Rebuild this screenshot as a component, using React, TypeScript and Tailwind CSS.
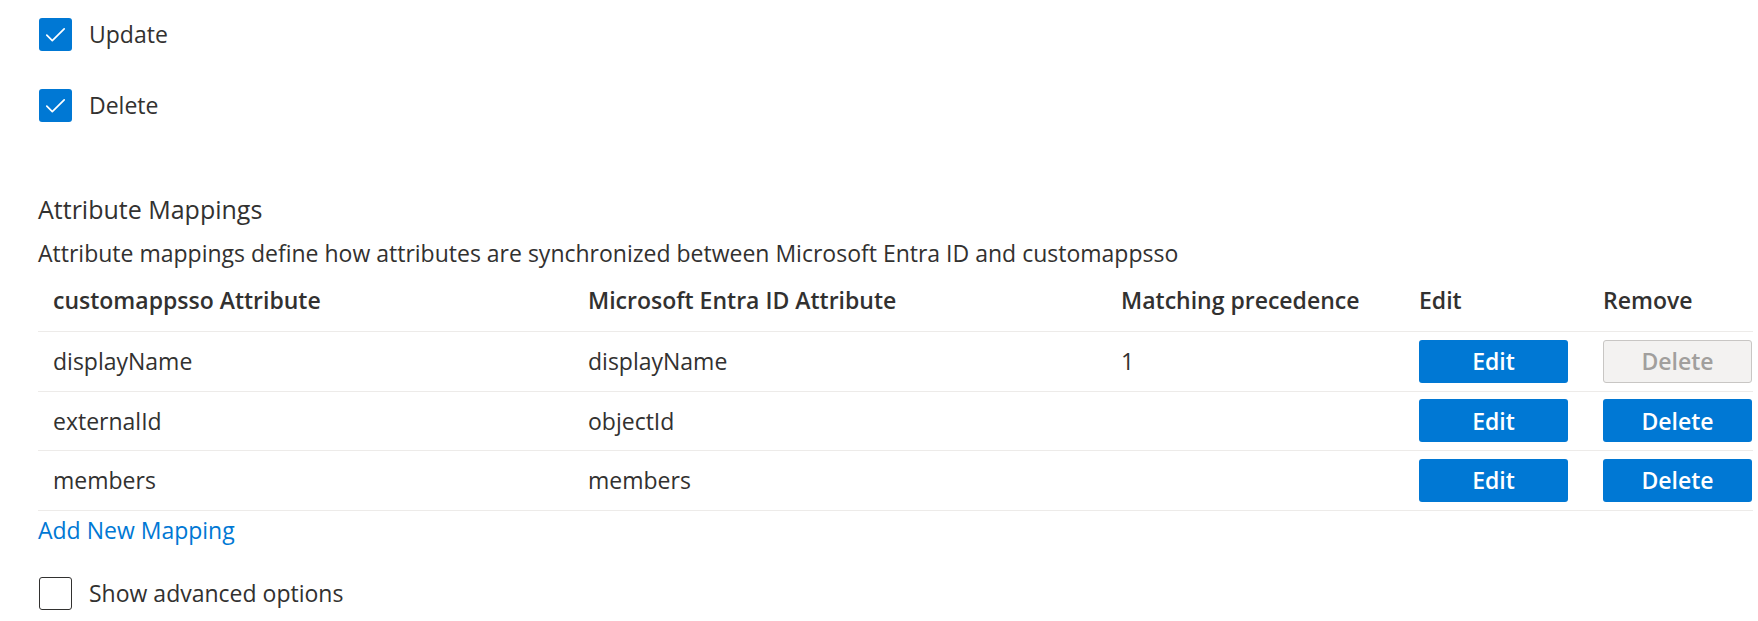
import React from "react";

function Check({ checked }: { checked: boolean }) {
  return checked ? (
    <div className="flex h-[33px] w-[33px] shrink-0 items-center justify-center rounded-[3px] bg-[#0078d4]">
      <svg width="21" height="16" viewBox="0 0 21 16" fill="none">
        <path d="M1.8 8.2 L7.3 13.7 L19.2 1.9" stroke="white" strokeWidth="1.7" strokeLinecap="round" strokeLinejoin="round" />
      </svg>
    </div>
  ) : (
    <div className="h-[33px] w-[33px] shrink-0 rounded-[3px] border-[1.5px] border-[#323130] bg-white" />
  );
}

const rows = [
  { a: "displayName", b: "displayName", c: "1", del: false },
  { a: "externalId", b: "objectId", c: "", del: true },
  { a: "members", b: "members", c: "", del: true },
];

const cols = "grid grid-cols-[535px_533px_298px_184px_165px] items-center";

export default function App() {
  return (
    <div className="min-h-[621px] bg-white pl-[38px] text-[23px] text-[#323130] font-['Open_Sans',sans-serif]">
      <div className="pt-[18px]">
        <div className="flex h-[33px] items-center gap-[17px] pl-[1px]">
          <Check checked />
          <span className="leading-[31px]">Update</span>
        </div>
        <div className="mt-[38px] flex h-[33px] items-center gap-[17px] pl-[1px]">
          <Check checked />
          <span className="leading-[31px]">Delete</span>
        </div>
      </div>
      <div className="mt-[72px] text-[25px] leading-[31px]">Attribute Mappings</div>
      <div className="mt-[13px] leading-[31px]">
        Attribute mappings define how attributes are synchronized between Microsoft Entra ID and customappsso
      </div>
      <div className="w-[1715px]">
        <div className={`${cols} h-[63px] border-b border-[#edebe9] font-semibold`}>
          <div className="pl-[15px]">customappsso Attribute</div>
          <div className="pl-[15px]">Microsoft Entra ID Attribute</div>
          <div className="pl-[15px]">Matching precedence</div>
          <div className="pl-[15px]">Edit</div>
          <div className="pl-[15px]">Remove</div>
        </div>
        {rows.map((r) => (
          <div key={r.a} className={`${cols} h-[59.5px] border-b border-[#edebe9]`}>
            <div className="pl-[15px]">{r.a}</div>
            <div className="pl-[15px]">{r.b}</div>
            <div className="pl-[15px]">{r.c}</div>
            <div className="pl-[15px]">
              <button className="h-[43px] w-[149px] rounded-[3px] bg-[#0078d4] font-semibold text-white">Edit</button>
            </div>
            <div className="pl-[15px]">
              {r.del ? (
                <button className="h-[43px] w-[149px] rounded-[3px] bg-[#0078d4] font-semibold text-white">Delete</button>
              ) : (
                <button className="h-[43px] w-[149px] rounded-[3px] border border-[#c8c6c4] bg-[#f3f2f1] font-semibold text-[#a19f9d]">
                  Delete
                </button>
              )}
            </div>
          </div>
        ))}
      </div>
      <div className="mt-[4px] leading-[31px] text-[#0078d4]">Add New Mapping</div>
      <div className="mt-[31px] flex h-[33px] items-center gap-[17px] pl-[1px]">
        <Check checked={false} />
        <span className="leading-[31px]">Show advanced options</span>
      </div>
    </div>
  );
}
